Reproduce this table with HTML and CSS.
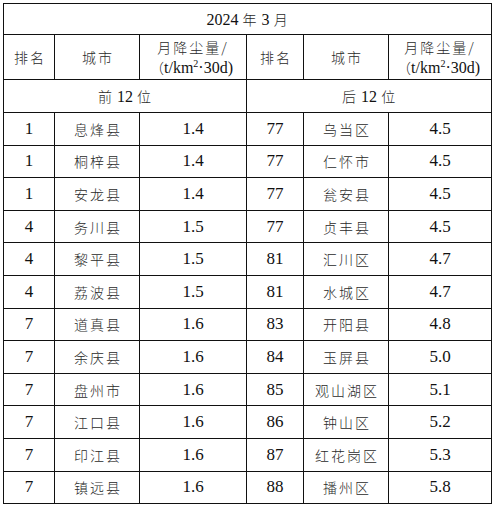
FILE: index.html
```html
<!DOCTYPE html>
<html lang="zh">
<head>
<meta charset="utf-8">
<link rel="stylesheet" href="styles.css">
</head>
<body>
<table class="dust">
  <colgroup>
    <col class="c-rank"><col class="c-city"><col class="c-val">
    <col class="c-rank2"><col class="c-city"><col class="c-val2">
  </colgroup>
  <tr class="r-title"><td colspan="6"><span class="num">2024</span> 年 <span class="num">3</span> 月</td></tr>
  <tr class="r-head">
    <td class="zh">排名</td><td class="zh">城市</td>
    <td class="unit"><span class="zh">月降尘量/</span><br><span class="paren">（</span><span class="num">t/km<sup>2</sup>·30d)</span></td>
    <td class="zh">排名</td><td class="zh">城市</td>
    <td class="unit"><span class="zh">月降尘量/</span><br><span class="paren">（</span><span class="num">t/km<sup>2</sup>·30d)</span></td>
  </tr>
  <tr class="r-sec">
    <td colspan="3">前 <span class="num">12</span> 位</td>
    <td colspan="3">后 <span class="num">12</span> 位</td>
  </tr>
  <tr><td class="num">1</td><td class="zh">息烽县</td><td class="num">1.4</td><td class="num">77</td><td class="zh">乌当区</td><td class="num">4.5</td></tr>
  <tr><td class="num">1</td><td class="zh">桐梓县</td><td class="num">1.4</td><td class="num">77</td><td class="zh">仁怀市</td><td class="num">4.5</td></tr>
  <tr><td class="num">1</td><td class="zh">安龙县</td><td class="num">1.4</td><td class="num">77</td><td class="zh">瓮安县</td><td class="num">4.5</td></tr>
  <tr><td class="num">4</td><td class="zh">务川县</td><td class="num">1.5</td><td class="num">77</td><td class="zh">贞丰县</td><td class="num">4.5</td></tr>
  <tr><td class="num">4</td><td class="zh">黎平县</td><td class="num">1.5</td><td class="num">81</td><td class="zh">汇川区</td><td class="num">4.7</td></tr>
  <tr><td class="num">4</td><td class="zh">荔波县</td><td class="num">1.5</td><td class="num">81</td><td class="zh">水城区</td><td class="num">4.7</td></tr>
  <tr><td class="num">7</td><td class="zh">道真县</td><td class="num">1.6</td><td class="num">83</td><td class="zh">开阳县</td><td class="num">4.8</td></tr>
  <tr><td class="num">7</td><td class="zh">余庆县</td><td class="num">1.6</td><td class="num">84</td><td class="zh">玉屏县</td><td class="num">5.0</td></tr>
  <tr><td class="num">7</td><td class="zh">盘州市</td><td class="num">1.6</td><td class="num">85</td><td class="zh">观山湖区</td><td class="num">5.1</td></tr>
  <tr><td class="num">7</td><td class="zh">江口县</td><td class="num">1.6</td><td class="num">86</td><td class="zh">钟山区</td><td class="num">5.2</td></tr>
  <tr><td class="num">7</td><td class="zh">印江县</td><td class="num">1.6</td><td class="num">87</td><td class="zh">红花岗区</td><td class="num">5.3</td></tr>
  <tr><td class="num">7</td><td class="zh">镇远县</td><td class="num">1.6</td><td class="num">88</td><td class="zh">播州区</td><td class="num">5.8</td></tr>
</table>
</body>
</html>
```

FILE: styles.css
```css
html, body {
  margin: 0;
  padding: 0;
  background: #ffffff;
}
body {
  padding: 3px 0 0 3px;
  font-family: "Noto Sans CJK SC", "Liberation Serif", sans-serif;
  color: #2a2a2a;
}
.dust {
  border-collapse: collapse;
  table-layout: fixed;
  width: 489px;
}
.dust td {
  border: 1px solid #111;
  text-align: center;
  vertical-align: middle;
  padding: 0;
  font-size: 14px;
  font-weight: 300;
  line-height: 18px;
}
.c-rank { width: 51px; }
.c-city { width: 85px; }
.c-val { width: 107px; }
.c-rank2 { width: 57px; }
.c-val2 { width: 103px; }

.r-title td { height: 30px; letter-spacing: 1px; }
.r-head td { height: 44px; }
.r-sec td { height: 32px; letter-spacing: 1px; }
.dust tr:nth-child(n+4) td { height: 31.6px; }

.dust td.zh, .dust .zh { letter-spacing: 2px; }
.dust td.zh { padding-left: 2px; }
.dust .num,
.dust td.num {
  font-family: "Liberation Serif", serif;
  font-size: 17px;
  font-weight: 400;
  color: #111;
  letter-spacing: 0;
}
.dust .r-title .num, .dust .r-sec .num { font-size: 16px; }
.dust .unit { line-height: 20px; }
.dust .unit .num { font-size: 16px; }
.unit sup { font-size: 10px; line-height: 0; vertical-align: 6px; }
.paren { font-size: 14px; margin-left: -3px; }
```
